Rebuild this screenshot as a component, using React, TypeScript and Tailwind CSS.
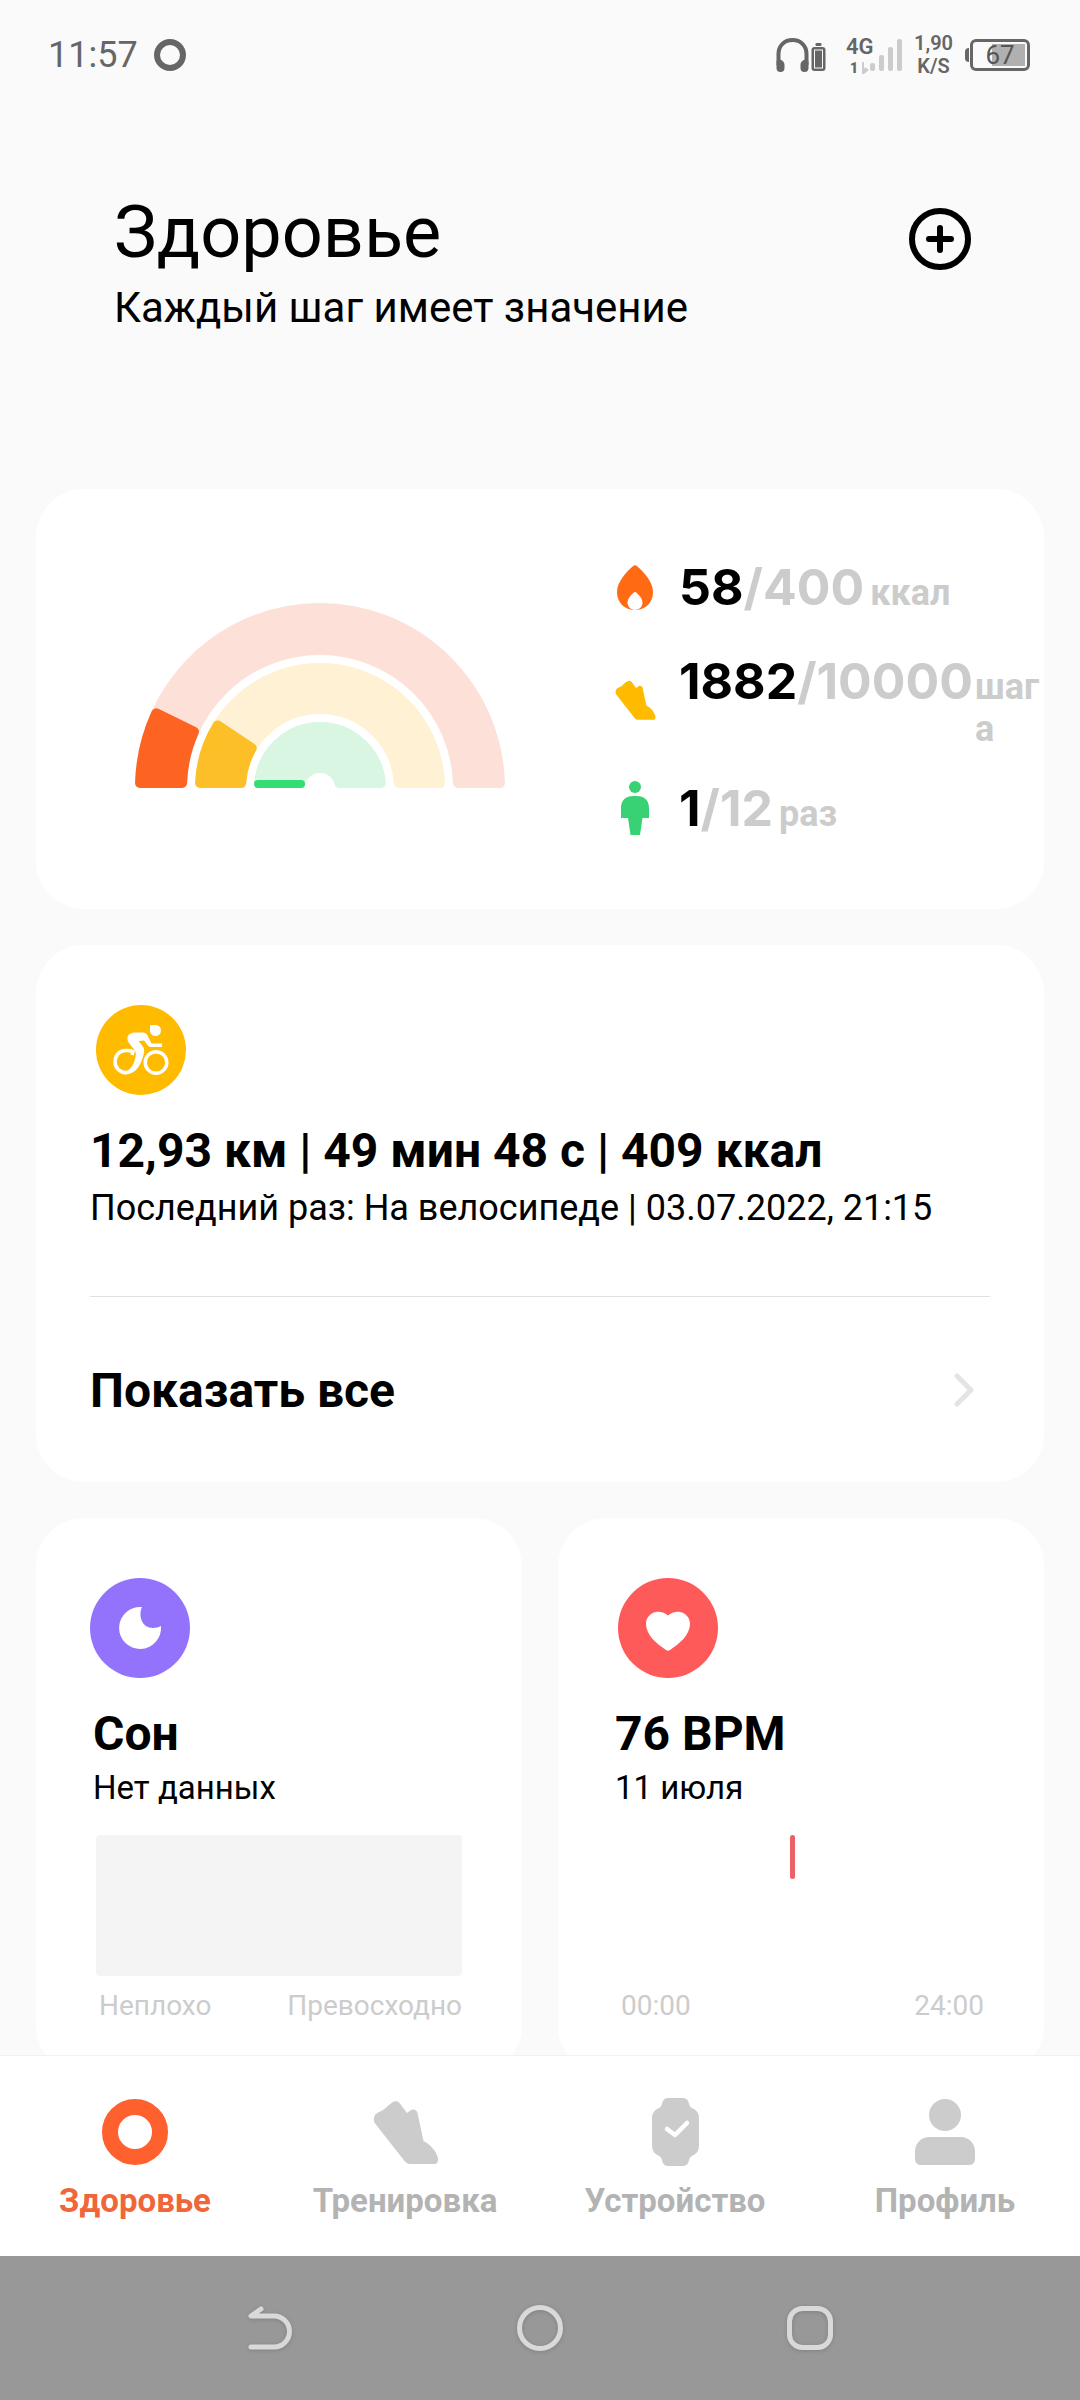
import type { ReactNode } from "react";
import clsx from "clsx";

const SHOE_PATH =
  "M2.5 23C-.5 19 .5 13 6 11C12 9 16 3 20 1C22 -.5 25 0 26.5 2L34 12L38 9C40.5 7.5 44 9 44.5 12L50.5 40C58 44 63 50 65 57C65.5 61 64 63 61 63H37C35 63 33 62 31.5 60Z";

const CORNER = 5;

// Ring segment that starts at the left end of the half circle. It is inset by
// CORNER and stroked with twice that, which rounds its corners.
function segment(outer: number, inner: number, share: number) {
  const ro = outer - CORNER;
  const ri = inner + CORNER;
  const end = Math.PI * share;
  const point = (r: number, angle: number) =>
    `${(185 - r * Math.cos(angle)).toFixed(2)} ${(185 - r * Math.sin(angle)).toFixed(2)}`;
  const inset = (r: number) => Math.asin(CORNER / r);
  return [
    `M${point(ri, inset(ri))}`,
    `L${point(ro, inset(ro))}`,
    `A${ro} ${ro} 0 0 1 ${point(ro, end - inset(ro))}`,
    `L${point(ri, end - inset(ri))}`,
    `A${ri} ${ri} 0 0 0 ${point(ri, inset(ri))}Z`,
  ].join("");
}

const RINGS = [
  { outer: 185, inner: 133, share: 0.145, track: "#fde0d7", fill: "#fd6321" },
  { outer: 125, inner: 74, share: 0.188, track: "#fef1d4", fill: "#fdbf27" },
  { outer: 66, inner: 15, share: 0, track: "#d9f6e3", fill: "#34dc74" },
];

function Gauge() {
  return (
    <svg width="370" height="185" viewBox="0 0 370 185" className="shrink-0" aria-hidden="true">
      {RINGS.map(r => (
        <g key={r.outer} strokeWidth={CORNER * 2} strokeLinejoin="round">
          <path d={segment(r.outer, r.inner, 1)} fill={r.track} stroke={r.track} />
          {r.share > 0 ? (
            <path d={segment(r.outer, r.inner, r.share)} fill={r.fill} stroke={r.fill} />
          ) : (
            <>
              <circle cx="185" cy="185" r="15" fill="#fff" />
              <rect x="119" y="177" width="51" height="8" rx="4" fill={r.fill} />
            </>
          )}
        </g>
      ))}
    </svg>
  );
}

function StatusBar() {
  return (
    <div className="flex h-[109px] shrink-0 items-center justify-between pr-[50px] pl-12 text-[#666666]">
      <div className="flex items-center gap-4">
        <span className="text-[36px] leading-[42px]">11:57</span>
        <span className="size-8 rounded-full border-[6px] border-[#666666]" />
      </div>
      <div className="flex items-center">
        <svg width="50" height="34" viewBox="0 0 50 34" fill="none" aria-hidden="true">
          <path d="M2.5 27V16C2.5 7.500 8.500 2 16.500 2S30.500 7.500 30.500 16V27" stroke="#666666" strokeWidth="4" />
          <path d="M1 22C5 21 8.500 23 8.500 27V30A4 4 0 0 1 .5 30V24ZM32 22C28 21 24.500 23 24.500 27V30A4 4 0 0 0 32.500 30V24Z" fill="#666666" />
          <rect x="39.500" y="5" width="6" height="3" rx="1" fill="#666666" />
          <rect x="35.500" y="9" width="14" height="24" rx="3" fill="#666666" />
          <rect x="38.500" y="12" width="8" height="18" stroke="#fafafa" strokeWidth="1" />
        </svg>
        <div className="ml-5 flex items-center">
          <div className="flex w-6 flex-col">
            <span className="text-[22px] leading-[26px] font-semibold">4G</span>
            <span className="flex items-center gap-1 pl-1 text-[14px] leading-4 font-black">
              1
              <svg width="7" height="12" viewBox="0 0 7 12" aria-hidden="true">
                <path d="M0 0H2V7L3 5L7 8L2 12H0Z" fill="#cccccc" />
              </svg>
            </span>
          </div>
          <svg width="32" height="32" viewBox="0 0 32 32" fill="#cccccc" aria-hidden="true">
            <rect x="0" y="24" width="5" height="8" rx="2" />
            <rect x="9" y="16" width="5" height="16" rx="2" />
            <rect x="18" y="8" width="5" height="24" rx="2" />
            <rect x="27" y="0" width="5" height="32" rx="2" />
          </svg>
        </div>
        <div className="ml-3 text-center text-[20px] leading-[23px] font-semibold">
          1,90
          <br />
          K/S
        </div>
        <div className="ml-3 flex items-center gap-px">
          <span className="h-3.5 w-1 rounded-l-sm bg-[#666666]" />
          <span className="relative flex h-8 w-[60px] items-center justify-center rounded-md border-3 border-[#666666]">
            <span className="absolute inset-y-0.5 right-0.5 w-[33px] bg-[#b0b0b0]" />
            <span className="relative text-[26px] leading-7 text-[#555555]">67</span>
          </span>
        </div>
      </div>
    </div>
  );
}

type StatProps = {
  icon: ReactNode;
  value: string;
  goal: string;
  unit: string;
  className?: string;
  unitClassName?: string;
};

function Stat({ icon, value, goal, unit, className, unitClassName }: StatProps) {
  return (
    <div className={clsx("flex items-center gap-5", className)}>
      <span className="flex w-12 shrink-0 justify-center">{icon}</span>
      <div className="flex min-w-0 flex-1 items-baseline">
        <span className="font-[Inter,sans-serif] text-[50px] leading-[60px] font-bold whitespace-nowrap">
          {value}
          <span className="text-[#cccccc]">/{goal}</span>
        </span>
        <span
          className={clsx(
            "min-w-0 flex-1 text-[36px] leading-[42px] font-bold break-all text-[#cccccc]",
            unitClassName,
          )}
        >
          {unit}
        </span>
      </div>
    </div>
  );
}

function FlameIcon() {
  return (
    <svg width="36" height="45" viewBox="0 0 36 45" aria-hidden="true">
      <path d="M16.500 .8Q18 -.4 19.500 .8C27 7 36 17 36 27C36 38 28 45 18 45S0 38 0 27C0 17 9 7 16.500 .8Z" fill="#ff6a13" />
      <path d="M16.800 27.500Q18 26.500 19.200 27.500C23 31 25.500 34 25.500 37.500C25.500 42 22 45 18 45S10.500 42 10.500 37.500C10.500 34 13 31 16.800 27.500Z" fill="#fff" />
    </svg>
  );
}

function PersonIcon() {
  return (
    <svg width="28" height="54" viewBox="0 0 28 54" fill="#38d274" aria-hidden="true">
      <circle cx="14" cy="6" r="6" />
      <path d="M0 37V27C0 19 5 15 12 15H16C23 15 28 19 28 27V37H21.500L19 54H9.500L7 37Z" />
    </svg>
  );
}

function CyclistIcon() {
  return (
    <svg width="90" height="90" viewBox="0 0 90 90" className="ml-1.5" fill="none" aria-hidden="true">
      <circle cx="45" cy="45" r="45" fill="#ffbb00" />
      <path d="M54 20H59.500A5.500 5.500 0 1 1 54 25.500Z" fill="#fff" />
      <path
        d="M38 27.500H47C49.500 27.500 50.500 28.500 51.500 30.500L55.500 38.500H66V42H55C53.500 42 52.500 41.500 51.500 40L48 35.500L42.500 36L46.500 41C48.500 43.500 48.500 47 47.500 50C45 59 41 68.500 30 69.500L30 66C36 64.500 38.500 57 39.500 52C40 49 40 47 38.500 45L33 38C29.500 33 32 28 38 27.500Z"
        fill="#fff"
      />
      <path d="M36 50L37 46.500C34 45.200 32 45.500 29.500 45.500C23 45.500 19 51 19 57C19 63 24 67.800 31 67.800" stroke="#fff" strokeWidth="3.500" />
      <circle cx="60" cy="57.500" r="10.800" stroke="#fff" strokeWidth="3.500" />
    </svg>
  );
}

function MoonIcon() {
  return (
    <svg width="100" height="100" viewBox="0 0 100 100" aria-hidden="true">
      <circle cx="50" cy="50" r="50" fill="#9373fb" />
      <path d="M52 29C48 38 52 50 63 50C66 50 69 49 71 48A21 21 0 1 1 52 29Z" fill="#fff" />
    </svg>
  );
}

function HeartIcon() {
  return (
    <svg width="100" height="100" viewBox="0 0 100 100" className="ml-1.5" aria-hidden="true">
      <circle cx="50" cy="50" r="50" fill="#ff5a5a" />
      <path d="M50 37.500C54 34 59 33.500 62 34C68 35 72 40 72 46C72 57 61 66 52 72Q50 73.500 48 72C39 66 28 57 28 46C28 40 32 35 38 34C41 33.500 46 34 50 37.500Z" fill="#fff" />
    </svg>
  );
}

type MetricCardProps = {
  icon: ReactNode;
  title: string;
  note: string;
  from: string;
  to: string;
  children: ReactNode;
};

function MetricCard({ icon, title, note, from, to, children }: MetricCardProps) {
  return (
    <section className="rounded-[48px] bg-white px-[54px] pt-[60px] pb-[52px]">
      {icon}
      <h2 className="mt-7 pl-[3px] text-[48px] leading-[56px] font-bold">{title}</h2>
      <p className="mt-1.5 pl-[3px] text-[33px] leading-10">{note}</p>
      <div className="mt-[27px] px-1.5">
        <div className="h-[141px]">{children}</div>
        <div className="mt-3.5 flex justify-between pl-[3px] text-[28px] leading-8 text-[#cccccc]">
          <span>{from}</span>
          <span>{to}</span>
        </div>
      </div>
    </section>
  );
}

const TABS = [
  {
    label: "Здоровье",
    active: true,
    icon: <circle cx="33" cy="33" r="25" fill="none" stroke="#ff612e" strokeWidth="16" />,
  },
  { label: "Тренировка", active: false, icon: <path d={SHOE_PATH} transform="translate(1 2)" /> },
  {
    label: "Устройство",
    active: false,
    icon: (
      <g transform="translate(10 -1)">
        <path d="M16 0H31Q35 0 36.500 4Q37.500 9 40 10Q47 13 47 20V48Q47 55 40 58Q37.500 59 36.500 64Q35 68 31 68H16Q12 68 10.500 64Q9.500 59 7 58Q0 55 0 48V20Q0 13 7 10Q9.500 9 10.500 4Q12 0 16 0Z" />
        <path d="M15 31L23 37L35 25" fill="none" stroke="#fff" strokeWidth="4.500" strokeLinecap="round" strokeLinejoin="round" />
      </g>
    ),
  },
  {
    label: "Профиль",
    active: false,
    icon: (
      <>
        <circle cx="33" cy="16" r="16" />
        <path d="M17 38H49C57 38 63 45 63 52V60C63 64 60 66 57 66H9C6 66 3 64 3 60V52C3 45 9 38 17 38Z" />
      </>
    ),
  },
];

export default function App() {
  return (
    <div className="flex h-screen flex-col bg-[#fafafa] font-[Roboto,sans-serif] text-black">
      <StatusBar />

      <main className="min-h-0 flex-1 overflow-hidden px-9">
        <header className="flex items-start justify-between pt-[82px] pr-[73px] pb-[157px] pl-[78px]">
          <div>
            <h1 className="text-[72px] leading-[84px]">Здоровье</h1>
            <p className="mt-[9px] text-[42px] leading-12">Каждый шаг имеет значение</p>
          </div>
          <button type="button" aria-label="Добавить" className="mt-[17px]">
            <svg width="62" height="62" viewBox="0 0 62 62" fill="none" stroke="#000" strokeWidth="6" strokeLinecap="round" aria-hidden="true">
              <circle cx="31" cy="31" r="28" />
              <path d="M20 31H42M31 20V42" />
            </svg>
          </button>
        </header>

        <div className="flex flex-col gap-9">
          <section className="flex items-start rounded-[48px] bg-white pt-[68px] pb-[71px] pl-[99px]">
            <div className="mt-[46px]">
              <Gauge />
            </div>
            <div className="ml-[106px] min-w-0 flex-1">
              <Stat icon={<FlameIcon />} value="58" goal="400" unit="ккал" unitClassName="pl-1.5" />
              <Stat
                icon={
                  <svg width="41" height="41" viewBox="0 0 66 64" fill="#ffbb00" aria-hidden="true">
                    <path d={SHOE_PATH} />
                  </svg>
                }
                value="1882"
                goal="10000"
                unit="шага"
                className="mt-[34px]"
                unitClassName="pl-0.5"
              />
              <Stat icon={<PersonIcon />} value="1" goal="12" unit="раз" className="mt-7" unitClassName="pl-1.5" />
            </div>
          </section>

          <section className="rounded-[48px] bg-white px-[54px] pt-[60px]">
            <CyclistIcon />
            <h2 className="mt-7 text-[48px] leading-[56px] font-bold">12,93 км | 49 мин 48 с | 409 ккал</h2>
            <p className="mt-2 text-[36px] leading-[42px]">Последний раз: На велосипеде | 03.07.2022, 21:15</p>
            <button
              type="button"
              className="mt-[67px] flex h-[186px] w-full items-center justify-between border-t border-[#e0e0e0] pr-4 text-left"
            >
              <span className="pt-0.5 text-[48px] leading-[56px] font-bold">Показать все</span>
              <svg width="20" height="34" viewBox="0 0 20 34" fill="none" stroke="#e4e4e4" strokeWidth="5" strokeLinecap="round" strokeLinejoin="round" aria-hidden="true">
                <path d="M3 3L17 17L3 31" />
              </svg>
            </button>
          </section>

          <div className="grid grid-cols-2 gap-9">
            <MetricCard icon={<MoonIcon />} title="Сон" note="Нет данных" from="Неплохо" to="Превосходно">
              <div className="h-full rounded-sm bg-[#f4f4f4]" />
            </MetricCard>
            <MetricCard icon={<HeartIcon />} title="76 BPM" note="11 июля" from="00:00" to="24:00">
              <div className="ml-[47%] h-11 w-[5px] rounded-full bg-[#ec6066]" />
            </MetricCard>
          </div>
        </div>
      </main>

      <nav className="grid shrink-0 grid-cols-4 border-t border-[#f2f2f2] bg-white pt-[43px] pb-[35px]">
        {TABS.map(tab => (
          <a
            key={tab.label}
            href="#"
            aria-current={tab.active ? "page" : undefined}
            className={clsx(
              "flex flex-col items-center gap-4 text-[33px] leading-10 font-bold",
              tab.active ? "text-[#f0653a]" : "text-[#b3b3b3]",
            )}
          >
            <svg width="66" height="66" viewBox="0 0 66 66" fill="#cccccc" className="overflow-visible" aria-hidden="true">
              {tab.icon}
            </svg>
            {tab.label}
          </a>
        ))}
      </nav>

      <div className="grid h-36 shrink-0 grid-cols-3 place-items-center bg-[#989898] px-[12.5%]">
        <button type="button" aria-label="Назад">
          <svg width="46" height="46" viewBox="0 0 46 46" fill="none" stroke="#d9d9d9" strokeWidth="5" strokeLinecap="round" strokeLinejoin="round" className="drop-shadow-sm" aria-hidden="true">
            <path d="M14 4L4 11H27A15.500 15.500 0 0 1 27 42H4" />
          </svg>
        </button>
        <button type="button" aria-label="Домой">
          <svg width="46" height="46" viewBox="0 0 46 46" fill="none" stroke="#d9d9d9" strokeWidth="5" className="drop-shadow-sm" aria-hidden="true">
            <circle cx="23" cy="23" r="20.500" />
          </svg>
        </button>
        <button type="button" aria-label="Недавние приложения">
          <svg width="46" height="46" viewBox="0 0 46 46" fill="none" stroke="#d9d9d9" strokeWidth="5" className="drop-shadow-sm" aria-hidden="true">
            <rect x="2.500" y="3.500" width="41" height="39" rx="13" />
          </svg>
        </button>
      </div>
    </div>
  );
}
